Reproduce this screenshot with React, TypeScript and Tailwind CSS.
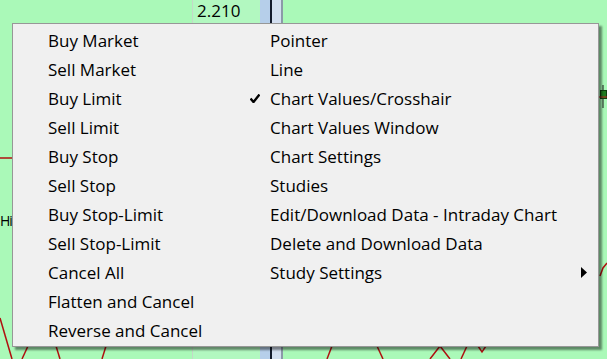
import { ReactNode } from 'react';

const leftItems = [
  'Buy Market',
  'Sell Market',
  'Buy Limit',
  'Sell Limit',
  'Buy Stop',
  'Sell Stop',
  'Buy Stop-Limit',
  'Sell Stop-Limit',
  'Cancel All',
  'Flatten and Cancel',
  'Reverse and Cancel',
];

const rightItems: { label: string; checked?: boolean; submenu?: boolean }[] = [
  { label: 'Pointer' },
  { label: 'Line' },
  { label: 'Chart Values/Crosshair', checked: true },
  { label: 'Chart Values Window' },
  { label: 'Chart Settings' },
  { label: 'Studies' },
  { label: 'Edit/Download Data - Intraday Chart' },
  { label: 'Delete and Download Data' },
  { label: 'Study Settings', submenu: true },
];

function Row({ children }: { children: ReactNode }) {
  return <div className="h-[29px] flex items-center whitespace-nowrap">{children}</div>;
}

function ChartLines() {
  // red study lines and the little candle peeking out from under the menu
  return (
    <svg className="absolute inset-0 pointer-events-none" width="607" height="359" viewBox="0 0 607 359">
      <g stroke="#b01010" strokeWidth="1.5" fill="none">
        <line x1="0" y1="158" x2="14" y2="158" />
        <polyline points="0,318 12,359" />
        <polyline points="28,346 22,359" />
        <polyline points="56,346 60,359" />
        <polyline points="106,346 102,359" />
        <polyline points="332,346 327,359" />
        <polyline points="377,346 383,359" />
        <polyline points="430,359 440,346 450,359" />
        <polyline points="467,346 461,359" />
        <polyline points="478,346 482,352 486,346" />
        <polyline points="600,276 603,268 607,263" />
      </g>
      <line x1="603" y1="85" x2="603" y2="108" stroke="#1a1a1a" strokeWidth="1" />
      <rect x="600.5" y="90.5" width="6" height="8" fill="#1e7a1e" stroke="#0f3f0f" strokeWidth="1" />
      <line x1="599" y1="97" x2="607" y2="97" stroke="#c02020" strokeWidth="1" />
    </svg>
  );
}

export default function App() {
  return (
    <div className="relative w-[607px] h-[359px] overflow-hidden bg-[#aaf9b8] font-['Open_Sans','Noto_Sans',sans-serif] text-[17px] text-black">
      <div className="flex h-full">
        <div className="w-[192px] relative">
          <span className="absolute left-0 top-[214px] text-[14px] tracking-[-1px] leading-none">Hi</span>
        </div>
        <div className="w-px bg-[#c4d8c8]" />
        <div className="w-[67px] bg-[#b2f8c0]">
          <div className="h-[23px] pl-[4px] leading-[22px]">2.210</div>
        </div>
        <div className="w-[10px] bg-[#b6cfea]" />
        <div className="w-[2px] bg-[#141c2c]" />
        <div className="w-[9px] bg-[#d3dff0]" />
        <div className="w-[2px] bg-[#8b9aa8]" />
        <div className="flex-1" />
      </div>

      <ChartLines />

      <div className="absolute left-[12px] top-[23px] w-[587px] bg-[#f0f0f0] border border-[#979797] shadow-[3px_3px_2px_rgba(0,0,0,0.45)] pt-[2px] pb-px flex">
        <div className="w-[200px] pl-[35px]">
          {leftItems.map((t) => (
            <Row key={t}>{t}</Row>
          ))}
        </div>
        <div className="flex-1">
          {rightItems.map((it) => (
            <Row key={it.label}>
              <span className="w-[57px] pl-[37px] flex items-center">
                {it.checked && (
                  <svg width="10" height="9" viewBox="0 0 10 9">
                    <path d="M0.5 4.5 L3.5 8 L9.5 0.5" stroke="#000" strokeWidth="2.4" fill="none" />
                  </svg>
                )}
              </span>
              <span className="flex-1">{it.label}</span>
              {it.submenu && (
                <svg className="mr-[11px]" width="6" height="11" viewBox="0 0 6 11">
                  <path d="M0 0 L6 5.5 L0 11 Z" fill="#000" />
                </svg>
              )}
            </Row>
          ))}
        </div>
      </div>
    </div>
  );
}
